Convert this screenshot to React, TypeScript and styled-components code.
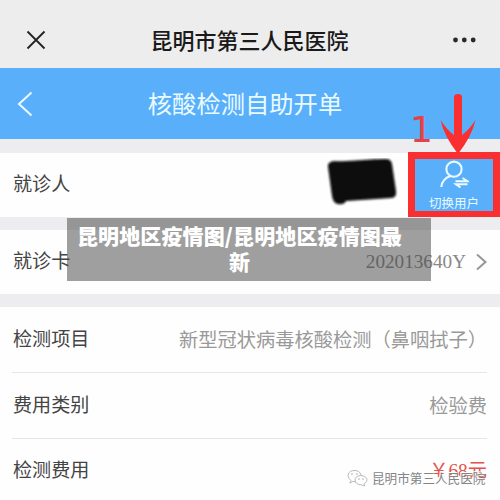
import React from "react";
import styled, { createGlobalStyle } from "styled-components";

const GlobalStyle = createGlobalStyle`
  * { box-sizing: border-box; }
  body { margin: 0; background: #fefefe; }
`;

const Screen = styled.main`
  position: relative;
  width: 500px;
  height: 500px;
  overflow: hidden;
  background: #fefefe;
  font-family: "Noto Sans CJK SC", sans-serif;
  display: flex;
  flex-direction: column;
`;

const TitleBar = styled.header`
  display: grid;
  grid-template-columns: 72px 1fr 72px;
  align-items: center;
  justify-items: center;
  flex: none;
  height: 68px;
  padding-top: 12px;
  background: #ededed;
`;

const Title = styled.h1`
  margin: 0 1px 3px 0;
  font-size: 22px;
  line-height: 30px;
  font-weight: 500;
  color: #1a1a1a;
  white-space: nowrap;
`;

const NavBar = styled.nav`
  display: grid;
  grid-template-columns: 50px 1fr 60px;
  align-items: center;
  justify-items: center;
  flex: none;
  height: 71px;
  background: #5aaffb;
`;

const NavTitle = styled.h2`
  margin: 0 0 1px;
  font-size: 24.3px;
  line-height: 34px;
  font-weight: 400;
  color: #e9fbff;
  white-space: nowrap;
`;

const Gap = styled.div<{ $h: number }>`
  flex: none;
  height: ${(p) => p.$h}px;
  background: #edecef;
`;

const Row = styled.section<{ $h: number; $right?: number }>`
  display: flex;
  flex: none;
  align-items: center;
  justify-content: space-between;
  height: ${(p) => p.$h}px;
  padding: 0 ${(p) => p.$right ?? 13}px 0 13px;
`;

const Group = styled.div`
  display: flex;
  flex-direction: column;
  flex: none;
`;

const Divider = styled.hr`
  width: 475px;
  height: 1px;
  margin: 0 0 0 12px;
  border: 0;
  background: #e6e6e8;
`;

const Label = styled.span`
  padding-bottom: 4px;
  font-size: 19.1px;
  line-height: 28px;
  color: #444;
  white-space: nowrap;
`;

const Value = styled.span`
  padding-bottom: 2px;
  font-size: 19.25px;
  line-height: 28px;
  color: #999;
  white-space: nowrap;
`;

const CardNumber = styled(Value)`
  display: flex;
  align-items: center;
  gap: 10px;
  padding-bottom: 0;
  font-family: "Liberation Serif", serif;
  font-size: 19.2px;
  color: #888;
`;

const Price = styled(Value)`
  padding-bottom: 0;
  font-family: "Liberation Serif", "Noto Sans CJK SC", serif;
  color: #e2534c;
`;

const Patient = styled.div`
  display: flex;
  align-items: center;
  gap: 9px;
`;

const Redaction = styled.svg`
  margin-bottom: 6px;
`;

const SwitchUser = styled.button`
  display: flex;
  flex-direction: column;
  align-items: center;
  justify-content: flex-start;
  gap: 5px;
  width: 92px;
  height: 66px;
  padding: 1px 0 0;
  border: 7px solid #f9302f;
  background: #5aaffb;
  color: #e9fbff;
  font-family: inherit;
  font-size: 12.5px;
  line-height: 16px;
  white-space: nowrap;
`;

const Banner = styled.div`
  position: absolute;
  left: 67px;
  top: 218px;
  width: 364px;
  height: 63px;
  padding: 4px 28px 0 9px;
  background: rgba(64, 64, 64, 0.5);
  color: #fff;
  font-size: 21px;
  font-weight: 900;
  letter-spacing: 0.12px;
  line-height: 26px;
  text-align: center;
`;

const Step = styled.span`
  position: absolute;
  left: 410px;
  top: 110px;
  font-family: "DejaVu Sans", sans-serif;
  font-size: 36px;
  line-height: 40px;
  color: #e8413f;
`;

const Arrow = styled.svg`
  position: absolute;
  left: 438px;
  top: 92px;
`;

const Watermark = styled.div`
  position: absolute;
  left: 347px;
  top: 466px;
  display: flex;
  align-items: center;
  gap: 4px;
  font-size: 12.6px;
  line-height: 24px;
  color: #858585;
  text-shadow: -1px -1px 0 #fff;
  white-space: nowrap;
`;

export default function App() {
  return (
    <Screen>
      <GlobalStyle />
      <TitleBar>
        <svg width="20" height="20" viewBox="0 0 20 20" stroke="#222" strokeWidth="1.8" fill="none">
          <path d="M1.5 1.5 18.5 18.5M18.5 1.5 1.5 18.5" />
        </svg>
        <Title>昆明市第三人民医院</Title>
        <svg width="24" height="6" viewBox="0 0 24 6" fill="#292929">
          <circle cx="3.5" cy="3" r="2.4" />
          <circle cx="12.3" cy="3" r="2.4" />
          <circle cx="21.2" cy="3" r="2.4" />
        </svg>
      </TitleBar>
      <NavBar>
        <svg width="16" height="26" viewBox="0 0 16 26" fill="none" stroke="#e9fbff" strokeWidth="2">
          <path d="M14.5 1.5 2 13 14.5 24.5" />
        </svg>
        <NavTitle>核酸检测自助开单</NavTitle>
      </NavBar>
      <Gap $h={14} />
      <Row $h={64} $right={0}>
        <Label>就诊人</Label>
        <Patient>
          <Redaction width="74" height="48" viewBox="0 0 74 48">
            <defs>
              <filter id="soft">
                <feGaussianBlur stdDeviation="0.9" />
              </filter>
            </defs>
            <path
              filter="url(#soft)"
              fill="#090909"
              d="M3 9Q2 4 9 3C25 4 44 1 61 1Q66 1 67 6L71 33Q72 40 66 40L21 43Q19 47 13 46Q8 45 7 38Z"
            />
          </Redaction>
          <SwitchUser>
            <svg width="30" height="30" viewBox="0 0 30 30" fill="none" stroke="#e9fbff" strokeWidth="2.1">
              <circle cx="15" cy="9.2" r="7.6" />
              <path d="M11.5 16C6 17.8 3 21 2.3 27" />
              <path d="M16.5 21.2H28.5L23.5 18M28.5 24.3H17L21.5 27.5" strokeWidth="2" />
            </svg>
            切换用户
          </SwitchUser>
        </Patient>
      </Row>
      <Gap $h={13} />
      <Row $h={64}>
        <Label>就诊卡</Label>
        <CardNumber>
          202013640Y
          <svg width="11" height="18" viewBox="0 0 11 18" fill="none" stroke="#969696" strokeWidth="2">
            <path d="M1 1.5 9.5 9 1 16.5" />
          </svg>
        </CardNumber>
      </Row>
      <Gap $h={13} />
      <Group>
        <Row $h={65}>
          <Label>检测项目</Label>
          <Value>新型冠状病毒核酸检测（鼻咽拭子）</Value>
        </Row>
        <Divider />
        <Row $h={65}>
          <Label>费用类别</Label>
          <Value>检验费</Value>
        </Row>
        <Divider />
        <Row $h={64}>
          <Label>检测费用</Label>
          <Price>￥68元</Price>
        </Row>
      </Group>
      <Step>1</Step>
      <Arrow width="40" height="64" viewBox="0 0 40 64" fill="#f9302f">
        <path d="M16 5Q16 2 20 2Q24 2 24 5V43Q31 38 37.5 28Q34 44 20 62Q6 44 2.5 28Q9 38 16 43Z" />
      </Arrow>
      <Banner>昆明地区疫情图/昆明地区疫情图最新</Banner>
      <Watermark>
        <svg width="21" height="18" viewBox="0 0 21 18" fill="#fefefe" stroke="#aaa" strokeWidth="0.8">
          <path d="M4 11.5 2.8 14 6 12.5Q12 13.5 14 9Q15 3 9 1.5Q2 1 1 6Q1 9.5 4 11.5Z" />
          <path d="M13.5 6.5Q8.5 7 8 11Q8.5 15.5 14 15.8L17.5 17 17 15Q20.5 13 20 10Q18.5 6.3 13.5 6.5Z" />
          <path d="M5 4.5V5.5M10 4.5V5.5M12 9.5V10.5M16 9.5V10.5" stroke="#888" strokeWidth="1.2" />
        </svg>
        昆明市第三人民医院
      </Watermark>
    </Screen>
  );
}
